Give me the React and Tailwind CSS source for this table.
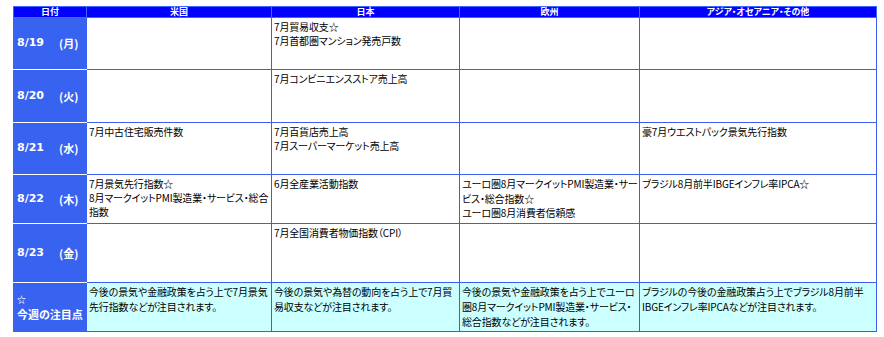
import React from "react";

const rows = [
  { d: "8/19", w: "(月)", h: "h-[52px]", us: [], jp: ["7月貿易収支☆", "7月首都圏マンション発売戸数"], eu: [], as: [] },
  { d: "8/20", w: "(火)", h: "h-[53px]", us: [], jp: ["7月コンビニエンスストア売上高"], eu: [], as: [] },
  { d: "8/21", w: "(水)", h: "h-[52px]", us: ["7月中古住宅販売件数"], jp: ["7月百貨店売上高", "7月スーパーマーケット売上高"], eu: [], as: ["豪7月ウエストパック景気先行指数"] },
  { d: "8/22", w: "(木)", h: "h-[49px]", us: ["7月景気先行指数☆", "8月マークイットPMI製造業・サービス・総合指数"], jp: ["6月全産業活動指数"], eu: ["ユーロ圏8月マークイットPMI製造業・サービス・総合指数☆", "ユーロ圏8月消費者信頼感"], as: ["ブラジル8月前半IBGEインフレ率IPCA☆"] },
  { d: "8/23", w: "(金)", h: "h-[59px]", us: [], jp: ["7月全国消費者物価指数（CPI）"], eu: [], as: [] },
];

function Cell({ lines }) {
  return (
    <td className="border border-[#3b5ef0] bg-white align-top pl-[2px] pr-0 pt-[1px] text-[10px] leading-[15px] tracking-[-0.15px] text-black">
      {lines.map((l, i) => (
        <div key={i} className="leading-[14px] first:leading-[15px]">{l}</div>
      ))}
    </td>
  );
}

export default function App() {
  return (
    <div className="bg-white w-[884px] h-[337px] pt-[6px] pl-[13px] [font-family:'Noto_Sans_CJK_JP',sans-serif] [font-feature-settings:'palt']">
      <table className="border-collapse table-fixed w-[863px]">
        <colgroup>
          <col className="w-[39px]" />
          <col className="w-[34px]" />
          <col className="w-[185px]" />
          <col className="w-[188px]" />
          <col className="w-[180px]" />
          <col className="w-[237px]" />
        </colgroup>
        <thead>
          <tr className="h-[11px]">
            {[
              ["日付", 2],
              ["米国", 1],
              ["日本", 1],
              ["欧州", 1],
              ["アジア・オセアニア・その他", 1],
            ].map(([t, c]) => (
              <th
                key={t}
                colSpan={c}
                className="border border-[#3b66ff] bg-[#0000ff] text-white text-[9px] leading-[10px] font-bold text-center p-0"
              >
                {t}
              </th>
            ))}
          </tr>
        </thead>
        <tbody>
          {rows.map((r) => (
            <tr key={r.d} className={r.h}>
              <td className="border border-[#3863f0] border-b-white bg-[#3863f0] text-white font-bold text-[11px] pl-[3px] align-middle [font-family:'DejaVu_Sans',sans-serif]">
                {r.d}
              </td>
              <td className="border border-[#3863f0] border-b-white bg-[#3863f0] text-white font-bold text-[11px] pl-[6px] align-middle">
                {r.w}
              </td>
              <Cell lines={r.us} />
              <Cell lines={r.jp} />
              <Cell lines={r.eu} />
              <Cell lines={r.as} />
            </tr>
          ))}
          <tr className="h-[49px]">
            <td colSpan={2} className="border border-[#3863f0] bg-[#3863f0] text-white font-bold text-[11px] leading-[14px] pl-[3px] align-middle">
              <div className="text-[9px]">☆</div>
              <div>今週の注目点</div>
            </td>
            {[
              "今後の景気や金融政策を占う上で7月景気先行指数などが注目されます。",
              "今後の景気や為替の動向を占う上で7月貿易収支などが注目されます。",
              "今後の景気や金融政策を占う上でユーロ圏8月マークイットPMI製造業・サービス・総合指数などが注目されます。",
              "ブラジルの今後の金融政策占う上でブラジル8月前半IBGEインフレ率IPCAなどが注目されます。",
            ].map((t, i) => (
              <td key={i} className="border border-[#3b5ef0] bg-[#ccffff] align-top pl-[2px] pr-0 pt-[1px] text-[10px] leading-[15px] tracking-[-0.15px] text-black">
                {t}
              </td>
            ))}
          </tr>
        </tbody>
      </table>
    </div>
  );
}
